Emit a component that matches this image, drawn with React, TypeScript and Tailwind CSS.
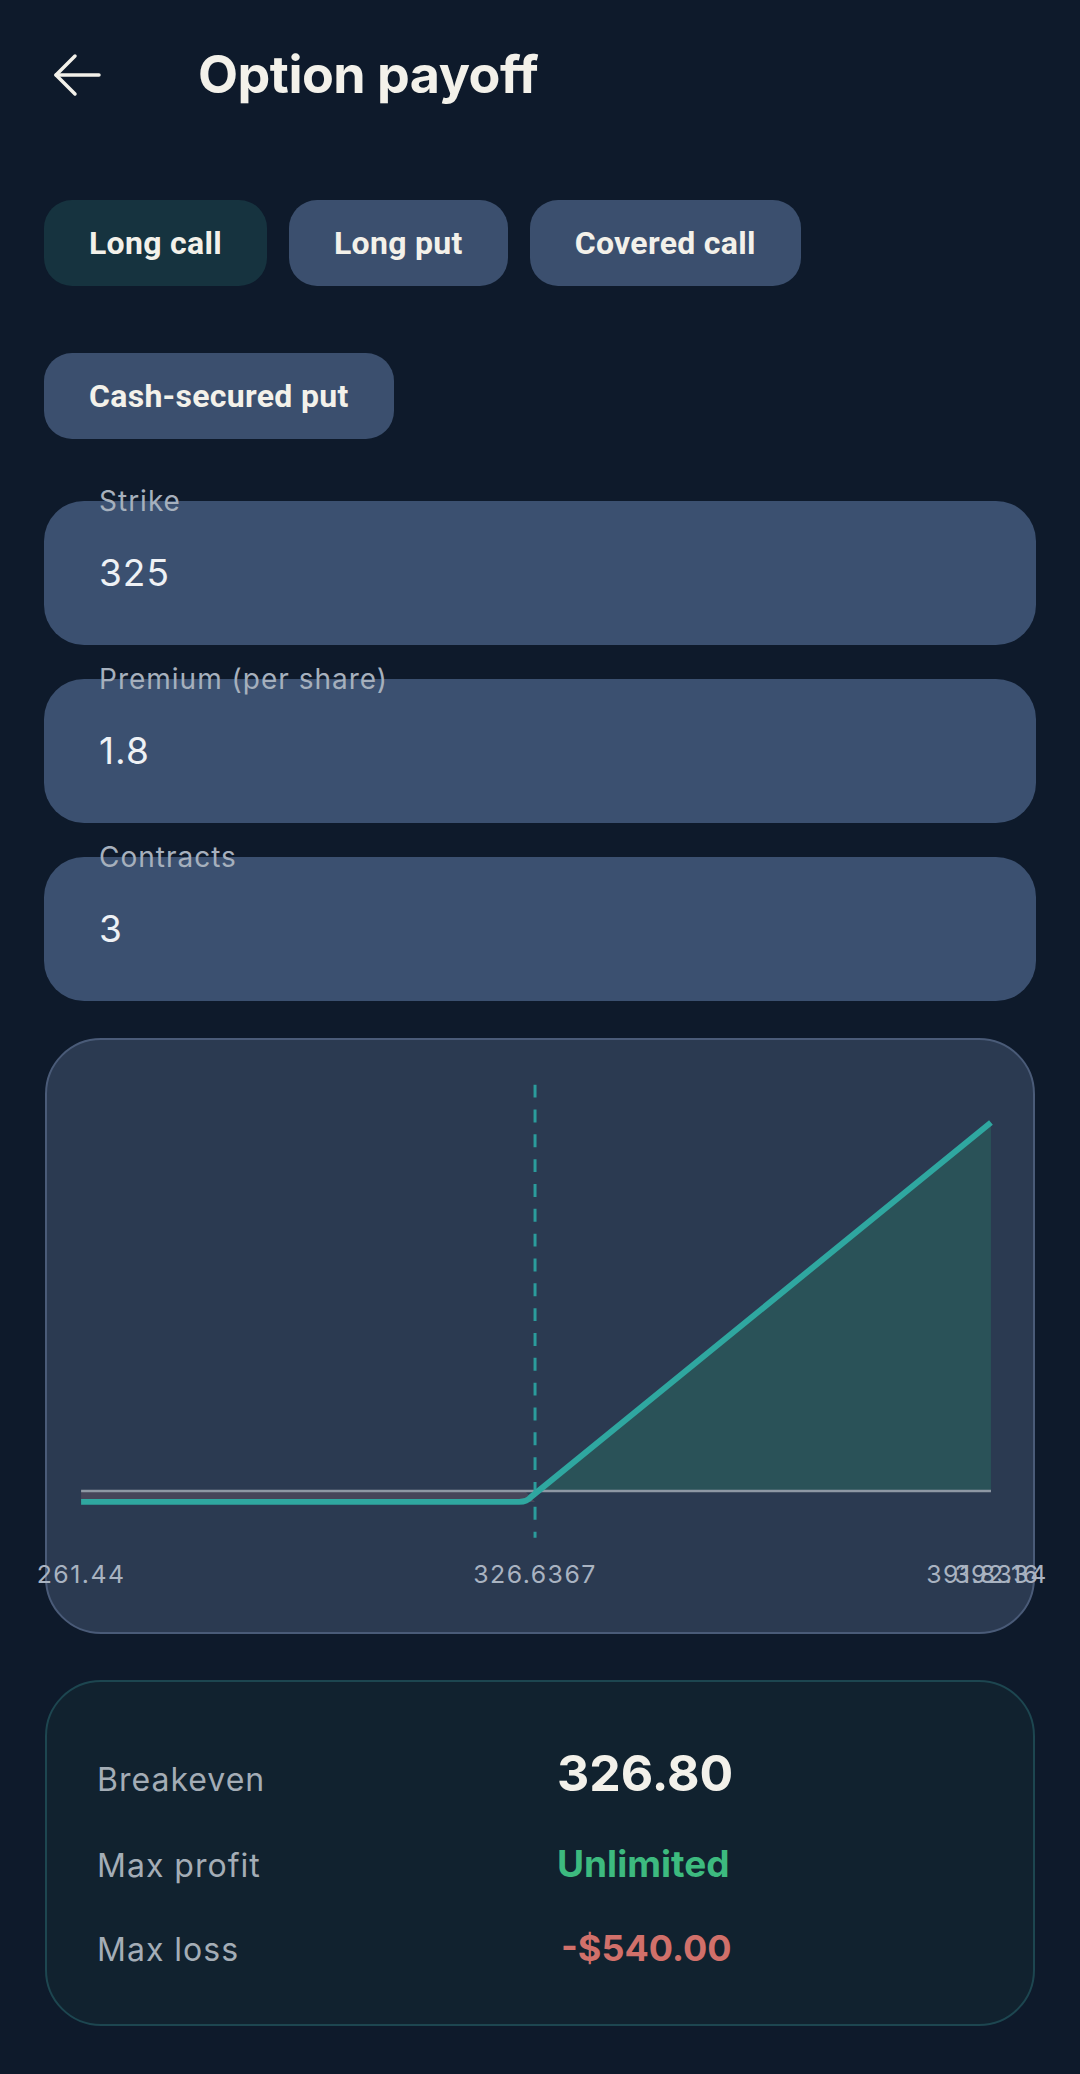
import { useState } from "react";

const STRATEGIES = ["Long call", "Long put", "Covered call", "Cash-secured put"];

const FIELDS = [
  { label: "Strike", value: "325" },
  { label: "Premium (per share)", value: "1.8" },
  { label: "Contracts", value: "3" },
];

function BackArrow() {
  return (
    <svg width="48" height="44" viewBox="0 0 48 44" fill="none" stroke="#f3f1ea" strokeWidth="3.5" strokeLinecap="round" strokeLinejoin="round">
      <path d="M3 22H46" />
      <path d="M22 3L3 22L22 41" />
    </svg>
  );
}

function PayoffChart() {
  // plot coordinates inside the 990x596 card
  const left = 33, right = 949, zeroY = 454, lossY = 465, knee = 480, top = 83, be = 490;
  return (
    <svg width="100%" height="100%" viewBox="0 0 990 596" className="overflow-visible">
      <polygon points={`${left},${zeroY} ${knee},${zeroY} ${knee + 10},${lossY} ${left},${lossY}`} fill="#46465a" />
      <polygon points={`${be},${zeroY} ${right},${top} ${right},${zeroY}`} fill="#2a5258" />
      <line x1={left} y1={zeroY} x2={right} y2={zeroY} stroke="#8e98a4" strokeWidth="2.5" />
      <line x1={be} y1={45} x2={be} y2={501} stroke="#2b9c9c" strokeWidth="3" strokeDasharray="13 12" />
      <path d={`M${left} ${lossY} H${knee - 6} Q${knee + 2} ${lossY} ${knee + 6} ${lossY - 5} L${right} ${top}`} fill="none" stroke="#2fa7a0" strokeWidth="6" />
      <g fill="#a9b3c1" fontSize="25" letterSpacing="1.5" fontFamily="Inter, 'Liberation Sans', sans-serif" textAnchor="middle">
        <text x={left} y={547}>261.44</text>
        <text x={be} y={547}>326.6367</text>
        <text x={right - 4} y={547}>391.8334</text>
        <text x={right + 6} y={547}>392.16</text>
      </g>
    </svg>
  );
}

export default function App() {
  const [active, setActive] = useState("Long call");

  return (
    <div className="min-h-[2074px] w-[1080px] bg-[#0e1a2b] pb-[47px] pt-[27px]" style={{ fontFamily: "Inter, 'Liberation Sans', sans-serif" }}>
      <header className="flex h-[96px] items-center pl-[53px]">
        <BackArrow />
        <h1 className="ml-[97px] text-[52px] font-bold leading-none tracking-[-0.5px] text-[#f3f1ea]">Option payoff</h1>
      </header>

      <div className="mt-[77px] flex flex-wrap gap-x-[22px] gap-y-[67px] px-[44px]">
        {STRATEGIES.map((s) => (
          <button
            key={s}
            onClick={() => setActive(s)}
            className={`h-[86px] rounded-[28px] px-[45px] text-[32px] font-bold tracking-[0.3px] text-[#f3f1ea] ${
              active === s ? "bg-[#16333f]" : "bg-[#3b4f6e]"
            }`}
            style={{ fontFamily: "Roboto, 'Liberation Sans', sans-serif" }}
          >
            {s}
          </button>
        ))}
      </div>

      <div className="mt-[62px] flex flex-col gap-[34px] px-[44px]">
        {FIELDS.map((f) => (
          <div key={f.label} className="relative">
            <div className="flex h-[144px] items-center rounded-[40px] bg-[#3b5070] pl-[55px] text-[37px] tracking-[1px] text-[#eef1f5]">
              {f.value}
            </div>
            <span className="absolute left-[55px] top-[-16px] text-[28px] leading-[32px] tracking-[1px] text-[#a6b0bd]">{f.label}</span>
          </div>
        ))}
      </div>

      <div className="mx-[45px] mt-[37px] h-[596px] rounded-[56px] border-2 border-[#4a5b78] bg-[#2b3a51]">
        <PayoffChart />
      </div>

      <div className="mx-[45px] mt-[46px] flex h-[346px] flex-col rounded-[56px] border-2 border-[#1d4650] bg-[#11222f] pl-[50px] pt-[66px]">
        <div className="flex h-[50px] items-baseline">
          <span className="w-[460px] text-[32px] leading-none tracking-[1px] text-[#a4adb6]">Breakeven</span>
          <span className="text-[50px] font-bold leading-none text-[#f3f1ea]">326.80</span>
        </div>
        <div className="mt-[47px] flex h-[37px] items-baseline">
          <span className="w-[460px] text-[32px] leading-none tracking-[1px] text-[#a4adb6]">Max profit</span>
          <span className="text-[37px] font-bold leading-none text-[#3dba7f]">Unlimited</span>
        </div>
        <div className="mt-[48px] flex h-[36px] items-baseline">
          <span className="w-[460px] text-[32px] leading-none tracking-[1px] text-[#a4adb6]">Max loss</span>
          <span className="ml-[4px] text-[36px] font-bold leading-none text-[#d1706a]">-$540.00</span>
        </div>
      </div>
    </div>
  );
}
